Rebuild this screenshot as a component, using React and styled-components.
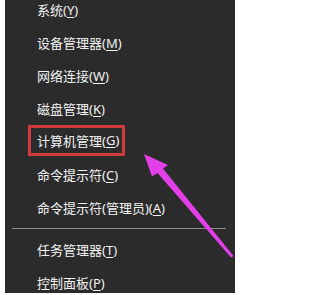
import React from "react";
import styled, { createGlobalStyle } from "styled-components";

const GlobalStyle = createGlobalStyle`
  html, body {
    margin: 0;
    padding: 0;
    background: #ffffff;
  }
  body {
    width: 239px;
    height: 295px;
    overflow: hidden;
  }
`;

const Page = styled.div`
  position: relative;
  width: 239px;
  height: 295px;
  padding: 0 4px 2px 5px;
  box-sizing: border-box;
  background: #ffffff;
`;

const Menu = styled.div`
  height: 100%;
  background: #2b2b2b;
  overflow: hidden;
  font-family: "Noto Sans", "Noto Sans CJK SC", sans-serif;
  font-size: 13px;
  color: #f2f2f2;
`;

const List = styled.div`
  display: flex;
  flex-direction: column;
  margin-top: -7px;
`;

const Row = styled.div`
  display: flex;
  align-items: center;
  height: 33px;
  padding-left: 32px;
  white-space: nowrap;
`;

const Label = styled.span`
  display: inline-flex;
  align-items: center;
  box-sizing: border-box;
  ${props =>
    props.marked &&
    `
    height: 31px;
    margin: -3px 0 0 -9px;
    padding: 0 3px 0 6px;
    border: 3px solid #cf3a3c;
  `}

  u {
    text-decoration-thickness: 1px;
    text-underline-offset: 2px;
  }
`;

const Separator = styled.div`
  height: 9px;
  display: flex;
  align-items: center;
  padding: 0 9px 0 7px;

  &::after {
    content: "";
    flex: 1;
    height: 1px;
    margin-top: -1px;
    background: #8c8c8c;
  }
`;

const Arrow = styled.svg`
  position: absolute;
  left: 0;
  top: 0;
  pointer-events: none;
`;

const items = [
  { text: "系统", key: "Y" },
  { text: "设备管理器", key: "M" },
  { text: "网络连接", key: "W" },
  { text: "磁盘管理", key: "K" },
  { text: "计算机管理", key: "G", marked: true },
  { text: "命令提示符", key: "C" },
  { text: "命令提示符(管理员)", key: "A" },
  "sep",
  { text: "任务管理器", key: "T" },
  { text: "控制面板", key: "P" },
];

export default function App() {
  return (
    <Page>
      <GlobalStyle />
      <Menu>
        <List>
          {items.map((item, i) =>
            item === "sep" ? (
              <Separator key={i} />
            ) : (
              <Row key={i}>
                <Label marked={item.marked}>
                  {item.text}(<u>{item.key}</u>)
                </Label>
              </Row>
            )
          )}
        </List>
      </Menu>
      <Arrow width="239" height="295" viewBox="0 0 239 295">
        <polygon
          points="144,154 168,165 163,168.5 233.5,256 231,257.5 157.5,173 152,176.5"
          fill="#e23fe8"
        />
      </Arrow>
    </Page>
  );
}
